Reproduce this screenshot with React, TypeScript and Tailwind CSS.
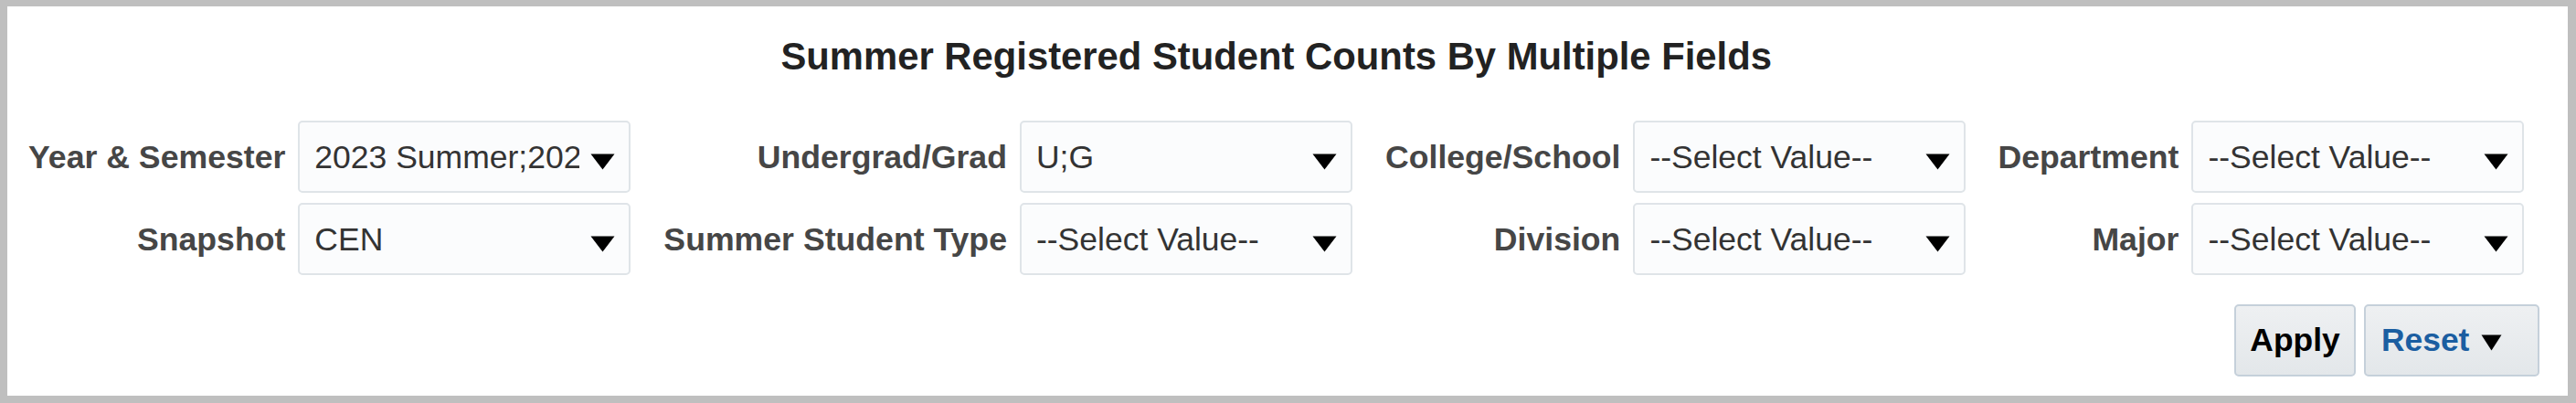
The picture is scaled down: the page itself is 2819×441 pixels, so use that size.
import React from "react";

const font = { fontFamily: '"Liberation Sans", Arial, sans-serif' };

function Arrow({ w = 27, h = 18, className = "" }: { w?: number; h?: number; className?: string }) {
  return (
    <svg width={w} height={h} viewBox={`0 0 ${w} ${h}`} className={className}>
      <polygon points={`0.5,0.5 ${w - 0.5},0.5 ${w / 2},${h - 0.5}`} fill="#000" />
    </svg>
  );
}

function Select({ value }: { value: string }) {
  return (
    <div className="w-[364px] h-[79px] border-2 border-[#dfe4e8] rounded-[5px] bg-[#fbfcfd] flex items-center pl-[16px] pr-[15px]">
      <span className="w-[290px] overflow-hidden whitespace-nowrap text-[35.5px] leading-[42px] text-[#333333]">
        {value}
      </span>
      <Arrow className="ml-auto mt-[10px]" />
    </div>
  );
}

function Label({ text, first = false }: { text: string; first?: boolean }) {
  return (
    <div
      className={`flex items-center justify-end whitespace-nowrap pr-[14px] text-[35.65px] leading-[42px] font-bold text-[#464646] ${
        first ? "" : "pl-[36px]"
      }`}
    >
      {text}
    </div>
  );
}

export default function App() {
  return (
    <div
      className="w-[2819px] h-[441px] box-border border-t-[7px] border-l-[8px] border-r-[9px] border-b-[8px] border-[#bfbfbf] bg-white flex flex-col"
      style={font}
    >
      <div className="pl-[23px] pt-[31px]">
        <div className="w-fit flex flex-col">
          <h1 className="text-center text-[41.8px] leading-[48px] font-bold text-[#222222]">
            Summer Registered Student Counts By Multiple Fields
          </h1>
          <div className="mt-[46px] grid grid-cols-[auto_364px_auto_364px_auto_363px_auto_364px] gap-y-[11px]">
            <Label text="Year & Semester" first />
            <Select value="2023 Summer;2022 Summer" />
            <Label text="Undergrad/Grad" />
            <Select value="U;G" />
            <Label text="College/School" />
            <Select value="--Select Value--" />
            <Label text="Department" />
            <Select value="--Select Value--" />

            <Label text="Snapshot" first />
            <Select value="CEN" />
            <Label text="Summer Student Type" />
            <Select value="--Select Value--" />
            <Label text="Division" />
            <Select value="--Select Value--" />
            <Label text="Major" />
            <Select value="--Select Value--" />
          </div>
        </div>
      </div>
      <div className="mt-[32px] flex justify-end gap-[9px] pr-[31px]">
        <button className="w-[133px] h-[79px] border-2 border-[#c5d0da] rounded-[5px] bg-gradient-to-b from-[#eef0f2] to-[#e3e7ea] flex items-center justify-center text-[35.4px] font-bold text-black">
          Apply
        </button>
        <button className="w-[192px] h-[79px] border-2 border-[#c5d0da] rounded-[5px] bg-gradient-to-b from-[#eef0f2] to-[#e3e7ea] flex items-center pl-[17px] text-[35.4px] font-bold text-[#1b5ea1]">
          <span>Reset</span>
          <Arrow w={23} h={18} className="ml-[13px] mt-[4px]" />
        </button>
      </div>
    </div>
  );
}
